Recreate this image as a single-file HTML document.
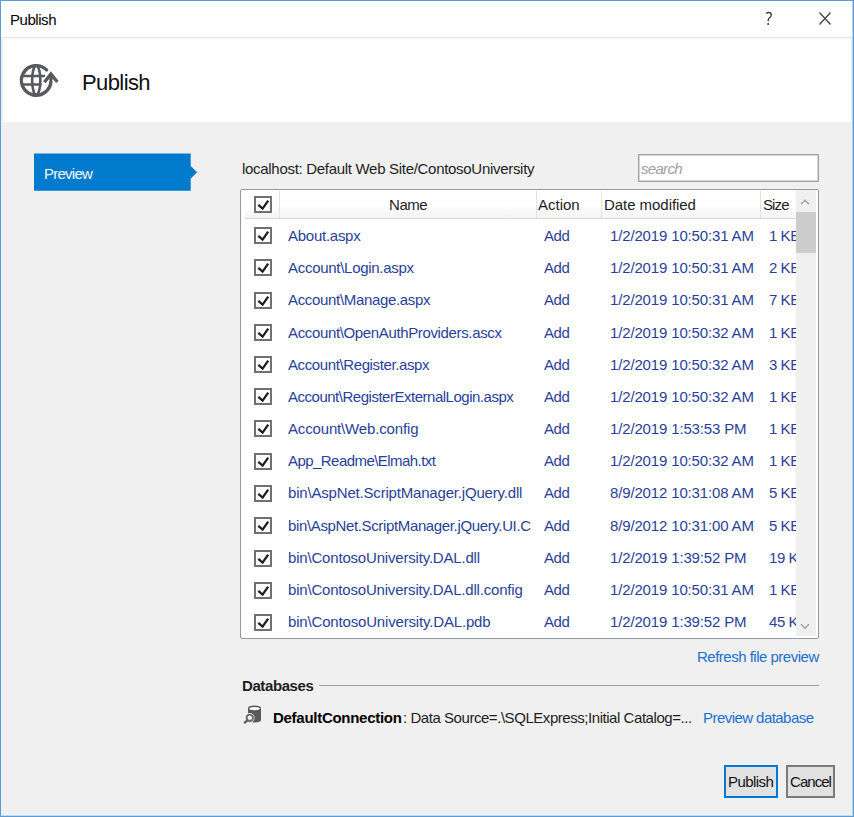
<!DOCTYPE html>
<html><head><meta charset="utf-8">
<style>
*{margin:0;padding:0;box-sizing:border-box}
html,body{width:854px;height:817px;overflow:hidden;background:#f0f0f0}
body{position:relative;font-family:"Liberation Sans",sans-serif;color:#000}
.a{position:absolute;white-space:nowrap}
#win{position:absolute;left:0;top:0;width:854px;height:817px;border:1px solid #5b9bd8;background:#f0f0f0}
#title{position:absolute;left:1px;top:1px;width:852px;height:36px;background:#fff}
#tline{position:absolute;left:1px;top:37px;width:852px;height:2px;background:linear-gradient(#e8e8e8 50%,#f3f3f3 50%)}
#hdr{position:absolute;left:3px;top:39px;width:848px;height:83px;background:#fff}
.t15{font-size:15px;letter-spacing:-0.45px}
#list{position:absolute;left:240px;top:189px;width:579px;height:450px;border:1px solid #959aa2;border-radius:2px;background:#fff;overflow:hidden}
.row{position:absolute;left:0;height:32px;width:555px}
.cb{position:absolute;width:18px;height:17px;border:2px solid #707070;background:#fff}
.cb svg{position:absolute;left:-2px;top:-2px}
.nm{position:absolute;left:288px;color:#2a3f98;font-size:15px;letter-spacing:-0.45px;overflow:hidden;width:243px}
.ac{position:absolute;left:544px;color:#2a3f98;font-size:15px;letter-spacing:-0.45px}
.dt{position:absolute;left:610px;color:#2a3f98;font-size:15px;letter-spacing:-0.15px}
.vd{top:191px;width:1px;height:27px;background:#e3e3e3}
.hd{top:196px;font-size:15px;letter-spacing:-0.45px;color:#1e1e1e}
.sz{position:absolute;left:769px;color:#2a3f98;font-size:15px;letter-spacing:-0.45px}
</style></head><body>
<div id="win"></div>
<div class="a" style="left:852px;top:1px;width:1px;height:815px;background:#b5d2ee;z-index:5"></div>
<div class="a" style="left:1px;top:815px;width:852px;height:1px;background:#c3dbf1;z-index:5"></div>
<div id="title"></div>
<div id="tline"></div>
<div id="hdr"></div>
<div class="a t15" style="left:10px;top:11px">Publish</div>
<svg class="a" style="left:760px;top:8px" width="18" height="20" viewBox="760 8 18 20"><path d="M766.2 13.6Q767.6 12.4 769 12.5Q771.4 12.7 771.3 15Q771.2 16.6 769.6 17.8Q768.2 18.8 768.2 20.2V21.3" fill="none" stroke="#3a3a3a" stroke-width="1.35"/><rect x="767.3" y="23.2" width="1.7" height="1.7" fill="#3a3a3a"/></svg>
<svg class="a" style="left:818px;top:11px" width="14" height="15" viewBox="0 0 14 15"><path d="M1.5 1.5L12.5 13.5M12.5 1.5L1.5 13.5" stroke="#444" stroke-width="1.3" fill="none"/></svg>

<!-- header icon -->
<svg class="a" style="left:14px;top:58px" width="50" height="46" viewBox="14 58 50 46">
<g fill="none" stroke="#58595b">
<ellipse cx="36.25" cy="80.3" rx="4.1" ry="14.6" stroke-width="2.6"/>
<path d="M22.5 76H45M22.5 84.4H41.5" stroke-width="2.5"/>
<path d="M46.6 69.9A14.8 14.8 0 1 0 51 80.3V74.5" stroke-width="3.4" stroke-linecap="round"/>
<path d="M44.4 82.2L50.9 74L57.4 82" stroke="#fff" stroke-width="6"/>
<path d="M51 80.3V74.5" stroke-width="3.4"/>
<path d="M44.4 82.2L50.9 74L57.4 82" stroke-width="3.3" stroke-linejoin="miter"/>
</g>
</svg>
<div class="a" style="left:82px;top:70px;font-size:22px;letter-spacing:-0.6px;color:#111">Publish</div>

<!-- Preview tab -->
<svg class="a" style="left:34px;top:153px" width="165" height="38" viewBox="0 0 165 38"><path d="M0 0.6H156.7V13L163.1 19.3L156.7 25.6V37.7H0Z" fill="#007acc"/></svg>
<div class="a t15" style="left:44px;top:165px;color:#f4f8fc;letter-spacing:-0.75px">Preview</div>

<div class="a t15" style="left:242px;top:160px;color:#1e1e1e;letter-spacing:-0.3px">localhost: Default Web Site/ContosoUniversity</div>
<div class="a" style="left:638px;top:154px;width:181px;height:28px;border:1px solid #a4a4a4;box-shadow:inset 0 0 0 1px #d4d4d4;background:#fff"></div>
<div class="a t15" style="left:641px;top:160px;color:#a0a0a0;font-style:italic;letter-spacing:-0.7px">search</div>

<div id="list"></div>
<div class="a" style="left:245px;top:190px;width:551px;height:29px;background:linear-gradient(#fff,#fff 50%,#f4f4f4);border-bottom:1px solid #d9d9d9"></div>
<div class="a vd" style="left:279px"></div>
<div class="a vd" style="left:536px"></div>
<div class="a vd" style="left:601px"></div>
<div class="a vd" style="left:760px"></div>
<div class="cb" style="left:254px;top:196px"><svg width="17" height="17" viewBox="0 0 17 17"><path d="M4.3 8.9L8.6 12.6L14.2 4.6" stroke="#1e1e1e" stroke-width="2.3" fill="none"/></svg></div>
<div class="a hd" style="left:389px">Name</div>
<div class="a hd" style="left:538px;letter-spacing:0px">Action</div>
<div class="a hd" style="left:604px;letter-spacing:-0.05px">Date modified</div>
<div class="a hd" style="left:763px;letter-spacing:-0.9px">Size</div>
<div class="a" style="left:796px;top:190px;width:20px;height:446px;background:#f0f0f0;z-index:2"></div>
<div class="a" style="left:796px;top:212px;width:20px;height:41px;background:#cdcdcd;z-index:3"></div>
<svg class="a" style="z-index:3;left:796px;top:195px" width="20" height="14" viewBox="796 195 20 14"><path d="M801 204.3L805 200.2L809 204.3" stroke="#a0a0a0" stroke-width="1.4" fill="none"/></svg>
<svg class="a" style="z-index:3;left:796px;top:618px" width="20" height="14" viewBox="796 618 20 14"><path d="M801 624.2L805 628.2L809 624.2" stroke="#a0a0a0" stroke-width="1.4" fill="none"/></svg>
<!--ROWS-->
<div class="cb" style="left:254px;top:227px"><svg width="17" height="17" viewBox="0 0 17 17"><path d="M4.3 8.9L8.6 12.6L14.2 4.6" stroke="#1e1e1e" stroke-width="2.3" fill="none" stroke-linecap="butt"/></svg></div>
<div class="a nm" style="top:227px;letter-spacing:-0.261px">About.aspx</div>
<div class="a ac" style="top:227px">Add</div>
<div class="a dt" style="top:227px">1/2/2019 10:50:31 AM</div>
<div class="a sz" style="top:227px">1 KB</div>
<div class="cb" style="left:254px;top:259px"><svg width="17" height="17" viewBox="0 0 17 17"><path d="M4.3 8.9L8.6 12.6L14.2 4.6" stroke="#1e1e1e" stroke-width="2.3" fill="none" stroke-linecap="butt"/></svg></div>
<div class="a nm" style="top:259px;letter-spacing:-0.285px">Account\Login.aspx</div>
<div class="a ac" style="top:259px">Add</div>
<div class="a dt" style="top:259px">1/2/2019 10:50:31 AM</div>
<div class="a sz" style="top:259px">2 KB</div>
<div class="cb" style="left:254px;top:292px"><svg width="17" height="17" viewBox="0 0 17 17"><path d="M4.3 8.9L8.6 12.6L14.2 4.6" stroke="#1e1e1e" stroke-width="2.3" fill="none" stroke-linecap="butt"/></svg></div>
<div class="a nm" style="top:291px;letter-spacing:-0.328px">Account\Manage.aspx</div>
<div class="a ac" style="top:291px">Add</div>
<div class="a dt" style="top:291px">1/2/2019 10:50:31 AM</div>
<div class="a sz" style="top:291px">7 KB</div>
<div class="cb" style="left:254px;top:324px"><svg width="17" height="17" viewBox="0 0 17 17"><path d="M4.3 8.9L8.6 12.6L14.2 4.6" stroke="#1e1e1e" stroke-width="2.3" fill="none" stroke-linecap="butt"/></svg></div>
<div class="a nm" style="top:324px;letter-spacing:-0.357px">Account\OpenAuthProviders.ascx</div>
<div class="a ac" style="top:324px">Add</div>
<div class="a dt" style="top:324px">1/2/2019 10:50:32 AM</div>
<div class="a sz" style="top:324px">1 KB</div>
<div class="cb" style="left:254px;top:356px"><svg width="17" height="17" viewBox="0 0 17 17"><path d="M4.3 8.9L8.6 12.6L14.2 4.6" stroke="#1e1e1e" stroke-width="2.3" fill="none" stroke-linecap="butt"/></svg></div>
<div class="a nm" style="top:356px;letter-spacing:-0.390px">Account\Register.aspx</div>
<div class="a ac" style="top:356px">Add</div>
<div class="a dt" style="top:356px">1/2/2019 10:50:32 AM</div>
<div class="a sz" style="top:356px">3 KB</div>
<div class="cb" style="left:254px;top:388px"><svg width="17" height="17" viewBox="0 0 17 17"><path d="M4.3 8.9L8.6 12.6L14.2 4.6" stroke="#1e1e1e" stroke-width="2.3" fill="none" stroke-linecap="butt"/></svg></div>
<div class="a nm" style="top:388px;letter-spacing:-0.486px">Account\RegisterExternalLogin.aspx</div>
<div class="a ac" style="top:388px">Add</div>
<div class="a dt" style="top:388px">1/2/2019 10:50:32 AM</div>
<div class="a sz" style="top:388px">1 KB</div>
<div class="cb" style="left:254px;top:420px"><svg width="17" height="17" viewBox="0 0 17 17"><path d="M4.3 8.9L8.6 12.6L14.2 4.6" stroke="#1e1e1e" stroke-width="2.3" fill="none" stroke-linecap="butt"/></svg></div>
<div class="a nm" style="top:420px;letter-spacing:-0.156px">Account\Web.config</div>
<div class="a ac" style="top:420px">Add</div>
<div class="a dt" style="top:420px">1/2/2019 1:53:53 PM</div>
<div class="a sz" style="top:420px">1 KB</div>
<div class="cb" style="left:254px;top:453px"><svg width="17" height="17" viewBox="0 0 17 17"><path d="M4.3 8.9L8.6 12.6L14.2 4.6" stroke="#1e1e1e" stroke-width="2.3" fill="none" stroke-linecap="butt"/></svg></div>
<div class="a nm" style="top:452px;letter-spacing:-0.550px">App_Readme\Elmah.txt</div>
<div class="a ac" style="top:452px">Add</div>
<div class="a dt" style="top:452px">1/2/2019 10:50:32 AM</div>
<div class="a sz" style="top:452px">1 KB</div>
<div class="cb" style="left:254px;top:485px"><svg width="17" height="17" viewBox="0 0 17 17"><path d="M4.3 8.9L8.6 12.6L14.2 4.6" stroke="#1e1e1e" stroke-width="2.3" fill="none" stroke-linecap="butt"/></svg></div>
<div class="a nm" style="top:484px;letter-spacing:-0.185px">bin\AspNet.ScriptManager.jQuery.dll</div>
<div class="a ac" style="top:484px">Add</div>
<div class="a dt" style="top:484px">8/9/2012 10:31:08 AM</div>
<div class="a sz" style="top:484px">5 KB</div>
<div class="cb" style="left:254px;top:517px"><svg width="17" height="17" viewBox="0 0 17 17"><path d="M4.3 8.9L8.6 12.6L14.2 4.6" stroke="#1e1e1e" stroke-width="2.3" fill="none" stroke-linecap="butt"/></svg></div>
<div class="a nm" style="top:517px;letter-spacing:-0.360px">bin\AspNet.ScriptManager.jQuery.UI.C</div>
<div class="a ac" style="top:517px">Add</div>
<div class="a dt" style="top:517px">8/9/2012 10:31:00 AM</div>
<div class="a sz" style="top:517px">5 KB</div>
<div class="cb" style="left:254px;top:550px"><svg width="17" height="17" viewBox="0 0 17 17"><path d="M4.3 8.9L8.6 12.6L14.2 4.6" stroke="#1e1e1e" stroke-width="2.3" fill="none" stroke-linecap="butt"/></svg></div>
<div class="a nm" style="top:549px;letter-spacing:-0.186px">bin\ContosoUniversity.DAL.dll</div>
<div class="a ac" style="top:549px">Add</div>
<div class="a dt" style="top:549px">1/2/2019 1:39:52 PM</div>
<div class="a sz" style="top:549px">19 KB</div>
<div class="cb" style="left:254px;top:582px"><svg width="17" height="17" viewBox="0 0 17 17"><path d="M4.3 8.9L8.6 12.6L14.2 4.6" stroke="#1e1e1e" stroke-width="2.3" fill="none" stroke-linecap="butt"/></svg></div>
<div class="a nm" style="top:581px;letter-spacing:-0.193px">bin\ContosoUniversity.DAL.dll.config</div>
<div class="a ac" style="top:581px">Add</div>
<div class="a dt" style="top:581px">1/2/2019 10:50:31 AM</div>
<div class="a sz" style="top:581px">1 KB</div>
<div class="cb" style="left:254px;top:614px"><svg width="17" height="17" viewBox="0 0 17 17"><path d="M4.3 8.9L8.6 12.6L14.2 4.6" stroke="#1e1e1e" stroke-width="2.3" fill="none" stroke-linecap="butt"/></svg></div>
<div class="a nm" style="top:613px;letter-spacing:-0.168px">bin\ContosoUniversity.DAL.pdb</div>
<div class="a ac" style="top:613px">Add</div>
<div class="a dt" style="top:613px">1/2/2019 1:39:52 PM</div>
<div class="a sz" style="top:613px">45 KB</div>
<!--/ROWS-->

<div class="a t15" style="left:697px;top:648px;color:#1c6fd0;letter-spacing:-0.5px">Refresh file preview</div>
<div class="a" style="left:242px;top:677px;font-size:15px;font-weight:bold;letter-spacing:-0.4px;color:#1e1e1e">Databases</div>
<div class="a" style="left:319px;top:685px;width:500px;height:1px;background:#a0a0a0"></div>
<svg class="a" style="left:240px;top:700px" width="30" height="30" viewBox="240 700 30 30">
<path d="M248 708.2Q248 705.6 254.5 705.6Q261 705.6 261 708.2V720Q261 722.4 254.5 722.4Q248 722.4 248 720Z" fill="#58595b"/>
<ellipse cx="254.5" cy="708.6" rx="5.3" ry="1.6" fill="#fff"/>
<circle cx="249.8" cy="717.8" r="4.8" fill="#f0f0f0"/>
<circle cx="249.8" cy="717.8" r="3.2" fill="none" stroke="#6a6a6a" stroke-width="1.9"/>
<path d="M247.4 720.2L244.8 722.6" stroke="#58595b" stroke-width="2.2" stroke-linecap="round"/>
</svg>
<div class="a" style="left:273px;top:709px;font-size:15px;font-weight:bold;letter-spacing:-0.28px;color:#000">DefaultConnection</div>
<div class="a t15" style="left:403px;top:709px;color:#1e1e1e">: Data Source=.\SQLExpress;Initial Catalog=...</div>
<div class="a t15" style="left:703px;top:709px;color:#1c6fd0;letter-spacing:-0.55px">Preview database</div>

<div class="a" style="left:724px;top:765px;width:54px;height:33px;border:2px solid #0078d7;background:#e1e1e1"></div>
<div class="a t15" style="left:728px;top:773px;color:#111;letter-spacing:-0.55px">Publish</div>
<div class="a" style="left:786px;top:765px;width:49px;height:33px;border:2px solid #7a7a7a;background:#e1e1e1"></div>
<div class="a t15" style="left:790px;top:773px;color:#111;letter-spacing:-0.95px">Cancel</div>
</body></html>
